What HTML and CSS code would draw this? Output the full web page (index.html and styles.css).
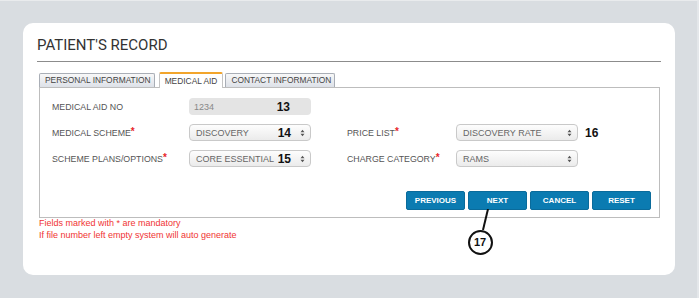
FILE: index.html
```html
<!DOCTYPE html>
<html lang="en">
<head>
    <meta charset="UTF-8">
    <meta name="viewport" content="width=device-width, initial-scale=1.0">
    <title>Patient's Record</title>
    <link rel="stylesheet" href="styles.css">
</head>
<body>
    <div class="page">
        <div class="card">
            <h1 class="title">PATIENT'S RECORD</h1>
            <div class="rule"></div>

            <div class="tabs">
                <div class="tab">PERSONAL INFORMATION</div>
                <div class="tab active">MEDICAL AID</div>
                <div class="tab">CONTACT INFORMATION</div>
            </div>

            <div class="panel">
                <div class="form-grid">
                    <div class="label l-left r1">MEDICAL AID NO</div>
                    <div class="field input c-left r1">
                        <span class="value">1234</span>
                        <span class="tag">13</span>
                    </div>

                    <div class="label l-left r2">MEDICAL SCHEME<span class="req">*</span></div>
                    <div class="field select c-left r2">
                        <span class="value">DISCOVERY</span>
                        <span class="tag">14</span>
                        <svg class="arrows" width="5" height="8" viewBox="0 0 5 8"><path d="M0.5 3.2 L2.5 0.8 L4.5 3.2 Z M0.5 4.8 L2.5 7.2 L4.5 4.8 Z" fill="#555"/></svg>
                    </div>

                    <div class="label l-right r2">PRICE LIST<span class="req">*</span></div>
                    <div class="field select c-right r2">
                        <span class="value">DISCOVERY RATE</span>
                        <svg class="arrows" width="5" height="8" viewBox="0 0 5 8"><path d="M0.5 3.2 L2.5 0.8 L4.5 3.2 Z M0.5 4.8 L2.5 7.2 L4.5 4.8 Z" fill="#555"/></svg>
                    </div>
                    <div class="tag outside r2">16</div>

                    <div class="label l-left r3">SCHEME PLANS/OPTIONS<span class="req">*</span></div>
                    <div class="field select c-left r3">
                        <span class="value">CORE ESSENTIAL</span>
                        <span class="tag">15</span>
                        <svg class="arrows" width="5" height="8" viewBox="0 0 5 8"><path d="M0.5 3.2 L2.5 0.8 L4.5 3.2 Z M0.5 4.8 L2.5 7.2 L4.5 4.8 Z" fill="#555"/></svg>
                    </div>

                    <div class="label l-right r3">CHARGE CATEGORY<span class="req">*</span></div>
                    <div class="field select c-right r3">
                        <span class="value">RAMS</span>
                        <svg class="arrows" width="5" height="8" viewBox="0 0 5 8"><path d="M0.5 3.2 L2.5 0.8 L4.5 3.2 Z M0.5 4.8 L2.5 7.2 L4.5 4.8 Z" fill="#555"/></svg>
                    </div>
                </div>

                <div class="actions">
                    <button class="btn">PREVIOUS</button>
                    <button class="btn has-callout">NEXT
                        <span class="callout">
                            <svg width="26" height="21" viewBox="0 0 26 21"><line x1="21" y1="0" x2="16" y2="21" stroke="#111" stroke-width="2"/></svg>
                            <span class="badge">17</span>
                        </span>
                    </button>
                    <button class="btn">CANCEL</button>
                    <button class="btn">RESET</button>
                </div>
            </div>

            <div class="notes">
                <div>Fields marked with * are mandatory</div>
                <div>If file number left empty system will auto generate</div>
            </div>
        </div>
    </div>
</body>
</html>
```

FILE: styles.css
```css
body {
    margin: 0;
    padding: 0;
    font-family: 'Liberation Sans', Arial, sans-serif;
    background-color: #d9dde1;
}
.page {
    height: 298px;
    box-sizing: border-box;
    padding: 22px 22px 23px 23px;
    border-top: 1px solid #e9ebed;
    border-right: 2px solid #e4e7ea;
}
.card {
    background: #fff;
    border-radius: 10px;
    height: 252px;
    box-sizing: border-box;
    padding: 14px 14px 0 14px;
}
.title {
    margin: 0;
    font-family: Roboto, 'Liberation Sans', sans-serif;
    font-weight: 400;
    font-size: 15px;
    line-height: 17px;
    color: #333;
}
.rule {
    margin-top: 7px;
    border-top: 1px solid #8c8c8c;
}

/* tabs */
.tabs {
    display: flex;
    align-items: flex-end;
    gap: 2px;
    margin: 9px 0 0 2px;
    height: 16px;
}
.tab {
    height: 13px;
    line-height: 13px;
    padding: 0 3px 0 5px;
    font-size: 8.4px;
    color: #444;
    border: 1px solid #a9aeb6;
    border-bottom: none;
    border-radius: 2px 2px 0 0;
    background: linear-gradient(#f8f8f8, #dde1e8);
}
.tab.active {
    height: 14px;
    line-height: 14px;
    margin: 0 0 -1px 2px;
    padding: 0 5px;
    background: #fff;
    border-color: #c4c4c4;
    border-top: 2px solid #f2a52c;
    position: relative;
    z-index: 1;
}

/* panel */
.panel {
    margin: 0 1px 0 2px;
    border: 1px solid #bdbdbd;
    padding: 10px 8px 7px 12px;
}
.form-grid {
    display: grid;
    grid-template-columns: 137px 122px 36px 109px 122px 1fr;
    grid-template-rows: 17px 17px 17px;
    row-gap: 9px;
    align-items: center;
}
.r1 { grid-row: 1; }
.r2 { grid-row: 2; }
.r3 { grid-row: 3; }
.l-left { grid-column: 1; }
.c-left { grid-column: 2; }
.l-right { grid-column: 4; }
.c-right { grid-column: 5; }
.outside { grid-column: 6; margin-left: 7px; }

.label {
    font-size: 8.8px;
    color: #555;
}
.req {
    color: #e8262a;
    font-weight: bold;
    font-size: 10px;
    position: relative;
    top: -1px;
}
.field {
    height: 17px;
    box-sizing: border-box;
    display: flex;
    align-items: center;
    border-radius: 4px;
    font-size: 9px;
}
.input {
    background: #e4e4e4;
    padding: 0 21px 0 5px;
}
.input .value { color: #888; }
.select {
    background: linear-gradient(#fdfdfd, #ebebeb);
    border: 1px solid #c9c9c9;
    padding: 0 5px 0 6px;
}
.select .value { color: #666; }
.field .tag { margin-left: auto; }
.select .tag { margin-right: 9px; }
.arrows { margin-left: auto; }
.tag + .arrows { margin-left: 0; }
.tag {
    font-size: 12px;
    font-weight: bold;
    color: #111;
}

/* buttons */
.actions {
    display: flex;
    justify-content: flex-end;
    gap: 3px;
    margin-top: 24px;
}
.btn {
    width: 59px;
    height: 19px;
    padding: 0;
    border: 1px solid #0a6b9b;
    border-radius: 2px;
    background-color: #0b7bb1;
    color: #fff;
    font-family: 'Liberation Sans', Arial, sans-serif;
    font-size: 8px;
    font-weight: bold;
}
.has-callout { position: relative; }
.callout {
    position: absolute;
    left: -2px;
    top: 100%;
    width: 26px;
    display: flex;
    flex-direction: column;
    align-items: center;
}
.callout svg { display: block; }
.badge {
    width: 21px;
    height: 21px;
    border: 2px solid #111;
    border-radius: 50%;
    background: #fff;
    color: #111;
    font-size: 11px;
    font-weight: bold;
    line-height: 21px;
    text-align: center;
}

.notes {
    margin-left: 2px;
    font-size: 9px;
    line-height: 11.5px;
    color: #f03434;
}
```
